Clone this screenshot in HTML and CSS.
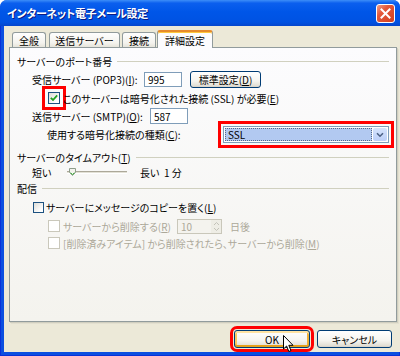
FILE: index.html
```html
<!DOCTYPE html>
<html lang="ja">
<head>
  <meta charset="UTF-8" />
  <title>インターネット電子メール設定</title>
  <link rel="stylesheet" href="styles.css">
</head>
<body>
  <div class="window">
    <div class="titlebar">
      <span class="title">インターネット電子メール設定</span>
      <span class="close">
        <svg width="11" height="11" viewBox="0 0 11 11"><path d="M1.5 1.5 L9.5 9.5 M9.5 1.5 L1.5 9.5" stroke="#fff" stroke-width="2" stroke-linecap="square"/></svg>
      </span>
    </div>
    <div class="frame">
      <div class="client">
        <div class="tabs">
          <div class="tab tab-1">全般</div>
          <div class="tab tab-2">送信サーバー</div>
          <div class="tab tab-3">接続</div>
          <div class="tab active">詳細設定</div>
        </div>

        <div class="panel">
          <div class="group"><span>サーバーのポート番号</span></div>

          <div class="row row-pop">
            <span class="lbl lbl-pop">受信サーバー (POP3)(<u>I</u>):</span>
            <span class="field field-pop">995</span>
            <span class="btn btn-std">標準設定(<u>D</u>)</span>
          </div>

          <div class="row row-ssl">
            <span class="check checked mark-check">
              <svg width="8" height="8" viewBox="0 0 8 8"><path d="M0.8 3.8 L3 6 L7.2 1.4" fill="none" stroke="#21a121" stroke-width="1.8"/></svg>
            </span>
            <span>このサーバーは暗号化された接続 (SSL) が必要(<u>E</u>)</span>
          </div>

          <div class="row row-smtp">
            <span class="lbl lbl-smtp">送信サーバー (SMTP)(<u>O</u>):</span>
            <span class="field field-smtp">587</span>
          </div>

          <div class="row row-enc">
            <span class="lbl lbl-enc">使用する暗号化接続の種類(<u>C</u>):</span>
            <span class="select mark-select">
              <span class="select-value">SSL</span>
              <span class="select-btn">
                <svg width="8" height="6" viewBox="0 0 8 6"><path d="M1 1.2 L4 4.2 L7 1.2" fill="none" stroke="#4d6185" stroke-width="1.6"/></svg>
              </span>
            </span>
          </div>

          <div class="group group-timeout"><span>サーバーのタイムアウト(<u>T</u>)</span></div>

          <div class="row row-slider">
            <span class="slider-lbl">短い</span>
            <span class="track">
              <svg class="thumb" width="7" height="8" viewBox="0 0 7 8"><path d="M0.5 0.5 H6.5 V4.5 L3.5 7.5 L0.5 4.5 Z" fill="#f4f3ee" stroke="#8e9c8a"/><path d="M1.5 4.6 L3.5 6.6 L5.5 4.6" fill="none" stroke="#3bb33b"/></svg>
            </span>
            <span class="slider-long">長い</span>
            <span>1 分</span>
          </div>

          <div class="group group-deliver"><span>配信</span></div>

          <div class="row row-copy">
            <span class="check"></span>
            <span>サーバーにメッセージのコピーを置く(<u>L</u>)</span>
          </div>

          <div class="row row-del disabled">
            <span class="check"></span>
            <span class="lbl lbl-del">サーバーから削除する(<u>R</u>)</span>
            <span class="spin">
              <span class="spin-value">10</span>
              <span class="spin-btns">
                <svg width="7" height="11" viewBox="0 0 7 11"><path d="M1 4 L3.5 1.5 L6 4 M1 7 L3.5 9.5 L6 7" fill="none" stroke="#c3c2b8"/></svg>
              </span>
            </span>
            <span class="days">日後</span>
          </div>

          <div class="row row-trash disabled">
            <span class="check"></span>
            <span>[削除済みアイテム] から削除されたら、サーバーから削除(<u>M</u>)</span>
          </div>
        </div>

        <div class="footer">
          <span class="btn btn-ok mark-ok">OK</span>
          <span class="btn btn-cancel">キャンセル</span>
        </div>
      </div>
    </div>

    <svg class="cursor" width="12" height="18" viewBox="0 0 12 18"><path d="M0.5 0.5 V14 L3.6 11 L5.8 16.5 L8 15.6 L5.8 10.3 H10 Z" fill="#fff" stroke="#000"/></svg>
  </div>
</body>
</html>
```

FILE: styles.css
```css
* {
  box-sizing: border-box;
}
body {
  margin: 0;
  font-family: "Noto Sans CJK JP", "Liberation Sans", sans-serif;
  font-size: 10px;
  font-feature-settings: "palt";
  color: #000;
  background: #fff;
}
u {
  text-decoration: underline;
  text-underline-offset: 1px;
}

/* window chrome */
.window {
  position: relative;
  width: 400px;
  height: 356px;
  display: flex;
  flex-direction: column;
  background: #0b4fe0;
  border-radius: 7px 7px 0 0;
  overflow: hidden;
}
.titlebar {
  height: 26px;
  display: flex;
  align-items: center;
  justify-content: space-between;
  padding: 0 5px 0 7px;
  background: linear-gradient(#3d8ef8 0, #0b5fee 12%, #0056e8 45%, #0052e2 85%, #0546cc 100%);
}
.title {
  color: #fff;
  font-size: 11px;
  font-weight: bold;
  letter-spacing: -0.3px;
  text-shadow: 1px 1px 0 #0a1a85;
}
.close {
  width: 19px;
  height: 19px;
  display: flex;
  align-items: center;
  justify-content: center;
  border: 1px solid #fff;
  border-radius: 3px;
  background: linear-gradient(135deg, #f0a08a 0, #e4593c 35%, #d2401f 100%);
}
.frame {
  flex: 1;
  display: flex;
  padding: 0 4px 4px;
  box-shadow: inset 1px 0 0 #0831d9, inset -1px 0 0 #0831d9, inset 0 -1px 0 #0831d9;
}
.client {
  flex: 1;
  display: flex;
  flex-direction: column;
  background: #ece9d8;
  padding: 4px 6px 0 5px;
}

/* tabs */
.tabs {
  display: flex;
  align-items: flex-end;
  height: 17px;
  padding-left: 3px;
}
.tab {
  height: 15px;
  display: flex;
  align-items: center;
  justify-content: center;
  border: 1px solid #919b9c;
  border-bottom: none;
  border-radius: 3px 3px 0 0;
  background: linear-gradient(#fefefe, #f4f3ee 70%, #e6e4da);
}
.tab-1 {
  width: 34px;
  margin-right: 3px;
}
.tab-2 {
  width: 71px;
  margin-right: 2px;
}
.tab-3 {
  width: 34px;
  margin-right: 1px;
}
.tab.active {
  position: relative;
  z-index: 1;
  width: 56px;
  height: 18px;
  margin-bottom: -1px;
  border-top: 2px solid #e68b2c;
  box-shadow: inset 0 1px 0 #ffc83c;
  background: #fcfcfe;
}

/* panel */
.panel {
  height: 275px;
  border: 1px solid #919b9c;
  box-shadow: 1px 1px 0 #d0cebf, 2px 2px 0 #e3e0d0;
  background: linear-gradient(#fcfcfe, #f4f3ee);
  padding: 6px 7px 0;
}
.group {
  height: 14px;
  display: flex;
  align-items: center;
  gap: 5px;
  white-space: nowrap;
}
.group::after {
  content: "";
  flex: 1;
  height: 1px;
  background: #d0d0bf;
}
.group-timeout {
  margin-top: 6px;
}
.group-deliver {
  height: 16px;
}
.row {
  display: flex;
  align-items: center;
  white-space: nowrap;
}
.row-pop {
  height: 22px;
  padding-left: 15px;
}
.row-ssl {
  height: 16px;
  padding-left: 31px;
}
.row-smtp {
  height: 20px;
  padding-left: 15px;
}
.row-enc {
  height: 18px;
  padding-left: 30px;
  align-items: flex-start;
}
.row-enc .lbl {
  line-height: 17px;
}
.row-slider {
  height: 16px;
  padding-left: 15px;
}
.row-copy {
  height: 22px;
  padding-left: 16px;
}
.row-del {
  height: 16px;
  padding-left: 31px;
}
.row-trash {
  height: 18px;
  padding-left: 31px;
}
.disabled {
  color: #aca899;
}

.lbl-pop {
  width: 112px;
}
.lbl-smtp {
  width: 118px;
}
.lbl-enc {
  width: 176px;
}
.lbl-del {
  width: 114px;
}

/* inputs */
.field {
  width: 38px;
  display: flex;
  align-items: center;
  padding-left: 3px;
  border: 1px solid #7f9db9;
  background: #fff;
}
.field-pop {
  height: 15px;
}
.field-smtp {
  height: 16px;
}
.btn {
  display: flex;
  align-items: center;
  justify-content: center;
  border: 1px solid #003c74;
  border-radius: 3px;
  background: linear-gradient(#ffffff, #f5f4ef 60%, #e3e0d6 90%, #d6d0c5);
}
.btn-std {
  width: 71px;
  height: 17px;
  margin-left: 8px;
}
.check {
  width: 12px;
  height: 12px;
  margin-right: 3px;
  display: flex;
  align-items: center;
  justify-content: center;
  border: 1px solid #1c5180;
  background: linear-gradient(135deg, #dcdcd7, #ffffff 80%);
}
.row-copy .check {
  width: 11px;
  height: 11px;
  margin-right: 2px;
}
.disabled .check {
  border-color: #cac8bb;
  background: #fff;
}
.select {
  width: 166px;
  height: 17px;
  display: flex;
  padding: 1px;
  border: 1px solid #7f9db9;
  background: #fff;
}
.select-value {
  flex: 1;
  padding-left: 2px;
  line-height: 12px;
  background: #b2c9f1;
  border: 1px dotted #5a6a88;
}
.select-btn {
  width: 14px;
  margin-left: 1px;
  display: flex;
  align-items: center;
  justify-content: center;
  border-radius: 2px;
  background: linear-gradient(#d6e3fc, #bccff8);
}

/* slider */
.slider-lbl {
  width: 35px;
}
.track {
  position: relative;
  width: 60px;
  height: 3px;
  margin-right: 13px;
  border-top: 1px solid #aca899;
  border-bottom: 1px solid #fff;
  background: #e3e1d6;
}
.thumb {
  position: absolute;
  left: 2px;
  top: -4px;
}
.slider-long {
  width: 24px;
}

/* spin */
.spin {
  width: 45px;
  height: 15px;
  display: flex;
  border: 1px solid #c9c7ba;
  background: #f4f3ee;
}
.spin-value {
  flex: 1;
  padding-left: 3px;
  line-height: 13px;
}
.spin-btns {
  width: 10px;
  display: flex;
  align-items: center;
  justify-content: center;
  background: #eeede5;
}
.days {
  margin-left: 8px;
}

/* footer buttons */
.footer {
  flex: 1;
  display: flex;
  justify-content: flex-end;
  align-items: flex-start;
  gap: 7px;
  padding: 8px 5px 0 0;
}
.btn-ok,
.btn-cancel {
  height: 18px;
}
.btn-ok {
  width: 76px;
  box-shadow: inset 0 2px 0 #ffe3a3, inset 0 -2px 0 #e5a01a, inset 2px 0 0 #fbc960, inset -2px 0 0 #f0b035;
}
.btn-cancel {
  width: 75px;
}

/* red highlight boxes */
.mark-check {
  outline: 3px solid #f00;
  outline-offset: 3px;
}
.mark-select {
  outline: 3px solid #f00;
  outline-offset: 2px;
}
.mark-ok {
  outline: 3px solid #f00;
  outline-offset: 1px;
}

.cursor {
  position: absolute;
  left: 283px;
  top: 335px;
}
```
